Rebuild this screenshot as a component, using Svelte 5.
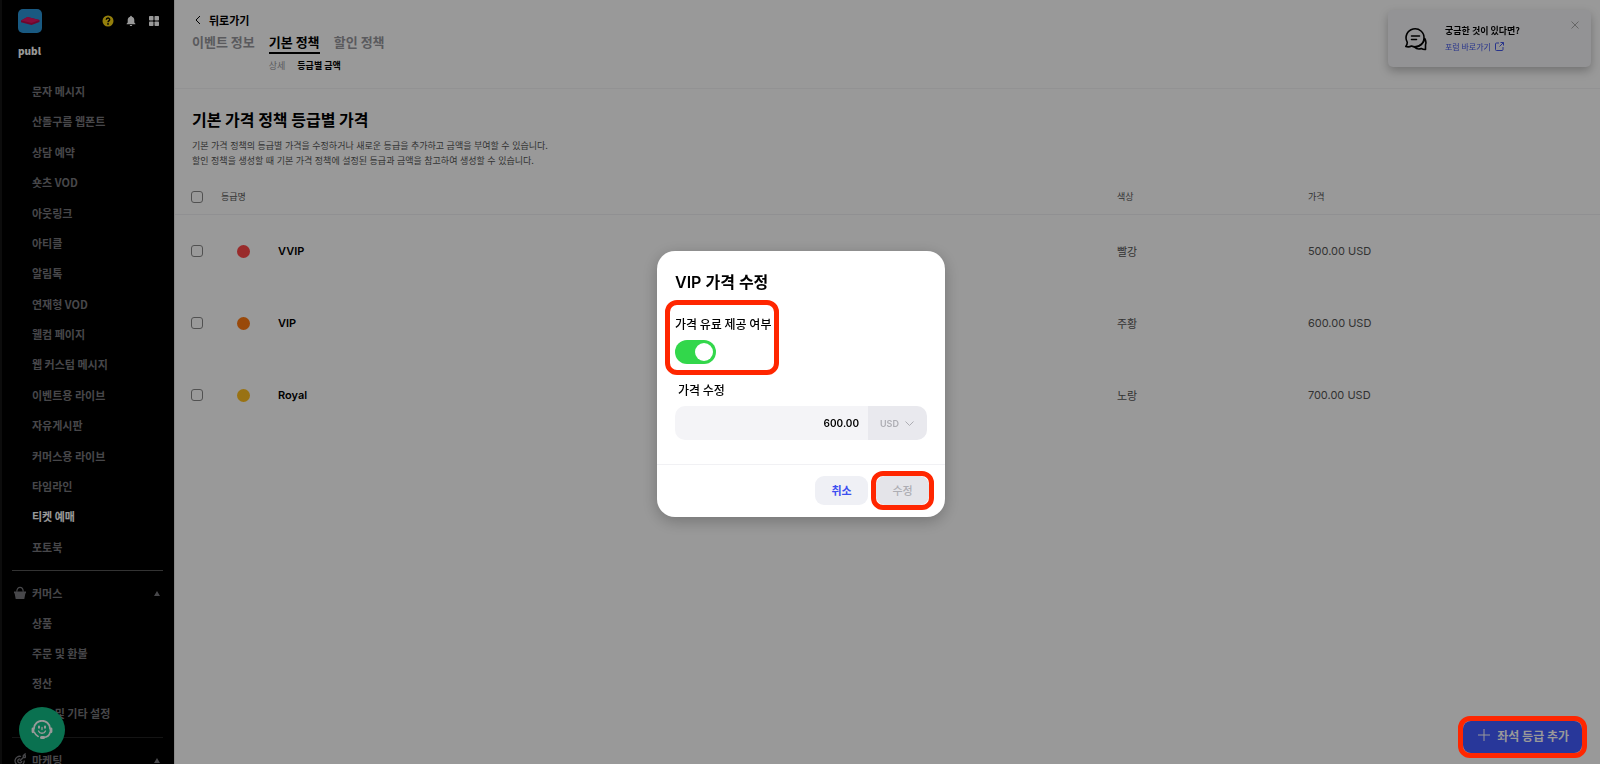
<script>
  let paid = $state(true);
  let price = $state('600.00');
  let currency = $state('USD');

  const menu = [
    '문자 메시지', '산돌구름 웹폰트', '상담 예약', '숏츠 VOD', '아웃링크', '아티클', '알림톡', '연재형 VOD',
    '웰컴 페이지', '웹 커스텀 메시지', '이벤트용 라이브', '자유게시판', '커머스용 라이브', '타임라인', '티켓 예매', '포토북'
  ];
  const commerce = ['상품', '주문 및 환불', '정산', '배송 및 기타 설정'];
  const active = '티켓 예매';

  const grades = [
    { name: 'VVIP', color: '빨강', hex: '#ff4848', price: '500.00 USD' },
    { name: 'VIP', color: '주황', hex: '#ff7a12', price: '600.00 USD' },
    { name: 'Royal', color: '노랑', hex: '#ffbf20', price: '700.00 USD' }
  ];
</script>

<div class="page">
  <aside class="sidebar">
    <div class="brand">
      <svg class="logo" viewBox="0 0 24 24" aria-hidden="true">
        <rect width="24" height="24" rx="5" fill="#2b94d8" />
        <path d="M3 11.5 9.500 8l12 3v2L13.500 16 3 13.200z" fill="#b80b4c" />
        <path d="M3 11.500 9.500 8l12 3-8 3z" fill="#dc1463" />
      </svg>
      <div class="tools">
        <button type="button" aria-label="도움말">
          <svg width="12" height="12" viewBox="0 0 12 12">
            <circle cx="6" cy="6" r="5.5" fill="#f5d313" />
            <path d="M4.300 4.800c0-2.300 3.400-2.300 3.400-.2C7.700 5.800 6 5.900 6 7.200" fill="none" stroke="#000" stroke-width="1.400" />
            <circle cx="6" cy="8.900" r=".9" fill="#000" />
          </svg>
        </button>
        <button type="button" aria-label="알림">
          <svg width="12" height="12" viewBox="0 0 12 12">
            <path d="M6 .8c.6 0 .9.4.9.9C8.600 2.100 9.300 3.400 9.300 5v2.400l1.100 1.300v.6H1.600v-.6l1.100-1.300V5c0-1.600.7-2.900 2.400-3.300 0-.5.3-.9.9-.9zM4.800 9.900h2.400c0 1.600-2.400 1.600-2.400 0z" fill="#fff" />
          </svg>
        </button>
        <button type="button" aria-label="앱">
          <svg width="12" height="12" viewBox="0 0 12 12" fill="#fff">
            <rect x="1" y="1" width="4.500" height="4.500" rx=".8" />
            <rect x="6.500" y="1" width="4.500" height="4.500" rx=".8" />
            <rect x="1" y="6.500" width="4.500" height="4.500" rx=".8" />
            <rect x="6.500" y="6.500" width="4.500" height="4.500" rx=".8" />
          </svg>
        </button>
      </div>
    </div>
    <strong class="site">publ</strong>
    <ul class="menu main-menu">
      {#each menu as item}
        <li><a href="#menu" class:active={item === active}>{item}</a></li>
      {/each}
    </ul>
    <hr />
    <button type="button" class="group">
      <svg width="12" height="14" viewBox="0 0 12 14">
        <path d="M0 5.500h12v1.700h-.6L10.300 13H1.700L.6 7.200H0z" fill="#77777c" />
        <path d="M2.800 5.800C2.800-.2 9.200-.2 9.200 5.800" fill="none" stroke="#77777c" stroke-width="1.200" />
      </svg>
      <span>커머스</span>
      <i class="caret"></i>
    </button>
    <ul class="menu">
      {#each commerce as item}
        <li><a href="#commerce">{item}</a></li>
      {/each}
    </ul>
    <hr class="soft" />
    <button type="button" class="group">
      <svg width="12" height="14" viewBox="0 0 12 14" fill="none" stroke="#77777c" stroke-width="1.300">
        <path d="M7 3.500A4.600 4.600 0 1 0 10.200 7.500" />
        <path d="M6.200 6A2 2 0 1 0 7.800 8M5.800 8l3.500-3.500V2.500L11 1v2h1.500L11 4.600H9.300" />
      </svg>
      <span>마케팅</span>
      <i class="caret"></i>
    </button>
  </aside>

  <main>
    <header>
      <a class="back" href="#back">
        <svg width="6" height="10" viewBox="0 0 6 10"><path d="M5 1 1 5l4 4" fill="none" stroke="#000" /></svg>
        뒤로가기
      </a>
      <nav class="tabs">
        <a href="#info">이벤트 정보</a>
        <div class="tab-group">
          <a class="active" href="#policy">기본 정책</a>
          <div class="subtabs">
            <a href="#detail">상세</a>
            <a class="active" href="#grades">등급별 금액</a>
          </div>
        </div>
        <a href="#discount">할인 정책</a>
      </nav>
    </header>

    <section class="intro">
      <h1>기본 가격 정책 등급별 가격</h1>
      <p>
        기본 가격 정책의 등급별 가격을 수정하거나 새로운 등급을 추가하고 금액을 부여할 수 있습니다.<br />
        할인 정책을 생성할 때 기본 가격 정책에 설정된 등급과 금액을 참고하여 생성할 수 있습니다.
      </p>
    </section>

    <table>
      <colgroup>
        <col class="col-check" />
        <col class="col-swatch" />
        <col />
        <col class="col-color" />
        <col class="col-price" />
      </colgroup>
      <thead>
        <tr>
          <th class="check"><input type="checkbox" aria-label="전체 선택" /></th>
          <th colspan="2">등급명</th>
          <th>색상</th>
          <th>가격</th>
        </tr>
      </thead>
      <tbody>
        {#each grades as grade}
          <tr>
            <td class="check"><input type="checkbox" aria-label={grade.name} /></td>
            <td class="swatch"><span class="dot" style="background: {grade.hex}"></span></td>
            <td class="name">{grade.name}</td>
            <td>{grade.color}</td>
            <td>{grade.price}</td>
          </tr>
        {/each}
      </tbody>
    </table>
  </main>
</div>

<div class="toast">
  <svg width="24" height="24" viewBox="0 0 24 24" fill="none" stroke="#000" stroke-width="1.600" stroke-linejoin="round" stroke-linecap="round">
    <path d="M3.300 15.300A9 9 0 1 1 7.500 19c-1.700 1-3.600 1.200-5.700.5.900-1.200 1.500-2.500 1.500-4.200z" />
    <path d="M20.700 11.500c1.400 2.200 1.500 4.300.8 6.300v4.700c-1.700.1-2.900-.2-4.200-1-2.400 1-5 .4-7-1.600 5.300.1 9.800-3.500 10.400-8.400z" />
    <path d="M7.500 9h8M7.500 12.500h5" />
  </svg>
  <div class="toast-text">
    <strong>궁금한 것이 있다면?</strong>
    <a href="#forum">
      포럼 바로가기
      <svg width="9" height="9" viewBox="0 0 9 9" fill="none" stroke="#4458e8"><path d="M4 1H1.500q-1 0-1 1v5.500q0 1 1 1H7q1 0 1-1V5M5.500.5h3v3M8.500.5l-4 4" /></svg>
    </a>
  </div>
  <button type="button" aria-label="닫기">
    <svg width="8" height="8" viewBox="0 0 8 8"><path d="m.5.5 7 7m0-7-7 7" stroke="#aaa" /></svg>
  </button>
</div>

<button type="button" class="chat" aria-label="상담">
  <svg width="22" height="20" viewBox="0 0 22 20" fill="none" stroke="#fff" stroke-linecap="round">
    <path d="M3 8.500C3.500-1.800 18.500-1.800 19 8.500" stroke-width="1.800" />
    <path d="M2 8.800v3M20 8.800v3" stroke-width="2.800" />
    <path d="M3.500 12.500c.8 2 2 3.200 3.700 4M19 12.500c-.5 2.900-2.300 4.700-6.500 4.900" stroke-width="1.600" />
    <path d="M10.500 17.500h2" stroke-width="3" />
    <path d="M8 6.500v1.300M14 6.500v1.300" stroke-width="2" />
    <path d="M7.500 11c1.200 3 5.800 3 7 0M11 7.500v2" stroke-width="1.300" />
  </svg>
</button>

<div class="overlay">
  <form class="modal" onsubmit={(e) => e.preventDefault()}>
    <div class="modal-body">
      <h2>VIP 가격 수정</h2>
      <div class="marked paid">
        <label for="paid">가격 유료 제공 여부</label>
        <input id="paid" class="toggle" type="checkbox" role="switch" bind:checked={paid} />
      </div>
      <label class="price-label" for="price">가격 수정</label>
      <div class="amount">
        <input id="price" type="text" bind:value={price} />
        <div class="currency">
          <select bind:value={currency} disabled aria-label="통화">
            <option>USD</option>
          </select>
          <svg width="9" height="6" viewBox="0 0 9 6"><path d="m.5.5 4 4 4-4" fill="none" stroke="#adadb3" /></svg>
        </div>
      </div>
    </div>
    <footer>
      <button type="button" class="cancel">취소</button>
      <div class="marked submit">
        <button type="submit" disabled>수정</button>
      </div>
    </footer>
  </form>
</div>

<div class="marked add">
  <button type="button">
    <svg width="12" height="12" viewBox="0 0 12 12"><path d="M6 0v12M0 6h12" stroke="#999" /></svg>
    좌석 등급 추가
  </button>
</div>

<style>
:global(body) {
  margin: 0;
  font-family: 'Noto Sans CJK KR', sans-serif;
  font-size: 11px;
  color: #000;
}
* { box-sizing: border-box; }
a { color: inherit; text-decoration: none; }
button {
  border: 0;
  padding: 0;
  background: none;
  font: inherit;
  color: inherit;
  cursor: pointer;
}
svg { display: block; flex: none; }
.page { display: flex; min-height: 100vh; background: #fff; }

/* sidebar */
.sidebar {
  width: 174px;
  height: 100vh;
  flex: none;
  overflow: hidden;
  padding: 9px 11px 0 12px;
  background: #000;
  color: #77777c;
  font-weight: 700;
  box-shadow: inset 2px 0 #151515;
}
.brand { display: flex; justify-content: space-between; padding: 0 3px 0 6px; }
.logo { width: 24px; height: 24px; }
.tools { display: flex; align-items: center; gap: 11px; }
.site { display: block; padding-left: 6px; margin-top: 10px; font-size: 10px; line-height: 16px; color: #fff; }
.menu { list-style: none; margin: 0; padding: 0 0 0 20px; }
.menu li { height: 30px; line-height: 30px; white-space: nowrap; }
.main-menu {
  display: grid;
  grid-auto-rows: 1fr;
  min-height: 486px;
  margin: 17px 0 8px;
}
.menu .active { color: #fff; }
hr { height: 1px; margin: 0; border: 0; background: #555; }
hr.soft { margin-top: 9px; background: #222; }
.group {
  display: flex;
  align-items: center;
  gap: 6px;
  width: 100%;
  height: 30px;
  margin-top: 7px;
  padding: 0 3px 0 2px;
}
.group span { margin-right: auto; }
.caret {
  border: 3px solid transparent;
  border-top: 0;
  border-bottom: 5px solid #77777c;
}

/* content */
main { flex: 1; min-width: 0; border-left: 1px solid #e4e4e4; }
header { height: 89px; padding: 12px 17px 0; border-bottom: 1px solid #f3f3f5; }
.back {
  display: flex;
  align-items: center;
  gap: 8px;
  padding-left: 3px;
  line-height: 16px;
  font-weight: 700;
}
.tabs { display: flex; gap: 14px; margin-top: 3px; }
.tabs a { font-size: 13px; line-height: 21px; font-weight: 700; color: #96969c; white-space: nowrap; }
.tabs a.active { color: #000; }
.tab-group { width: 51px; }
.tab-group > a { display: block; border-bottom: 2px solid #000; }
.subtabs { display: flex; gap: 12px; margin-top: 2px; }
.tabs .subtabs a { font-size: 9px; line-height: 20px; font-weight: 400; }
.tabs .subtabs a.active { font-weight: 700; }
.intro { padding: 18px 17px 0; }
h1 { margin: 0; font-size: 16px; line-height: 24px; }
p {
  margin: 7px 0 0;
  font-family: Inter, 'Noto Sans CJK KR', sans-serif;
  font-size: 9px;
  line-height: 15px;
  color: #555;
}
table { width: 100%; table-layout: fixed; border-collapse: collapse; margin-top: 10px; }
.col-check { width: 46px; }
.col-swatch { width: 57px; }
.col-color { width: 13.4%; }
.col-price { width: 20.5%; }
th {
  height: 36px;
  padding: 2px 0 0;
  border-bottom: 1px solid #f1f1f3;
  font-size: 9px;
  font-weight: 400;
  text-align: left;
  color: #555;
}
td { height: 72px; padding: 2px 0 0; font-family: Inter, 'Noto Sans CJK KR', sans-serif; color: #555; }
.check { padding-left: 16px; }
.check input {
  display: block;
  appearance: none;
  width: 12px;
  height: 12px;
  margin: 0;
  border: 1px solid #888;
  border-radius: 3px;
  background: #fff;
}
.check input:checked { background: #4458e8; }
.swatch { padding-left: 16px; }
.dot { display: block; width: 13px; height: 13px; border-radius: 50%; }
.name { font-weight: 600; color: #000; }

/* floating parts */
.toast {
  position: fixed;
  top: 10px;
  right: 9px;
  display: flex;
  align-items: center;
  gap: 17px;
  width: 203px;
  height: 57px;
  padding-left: 16px;
  border-radius: 5px;
  background: #f5f5f9;
  box-shadow: 0 4px 10px rgba(0, 0, 0, 0.25);
}
.toast-text { flex: 1; font-size: 9px; line-height: 16px; white-space: nowrap; }
.toast-text strong { display: block; }
.toast-text a { display: flex; align-items: center; gap: 4px; font-size: 8px; color: #4458e8; }
.toast button { align-self: flex-start; padding: 11px 12px 0 0; }
.chat {
  position: fixed;
  left: 19px;
  bottom: 11px;
  display: grid;
  place-items: center;
  width: 46px;
  height: 46px;
  border-radius: 50%;
  background: #12bd85;
}
.overlay {
  position: fixed;
  inset: 0;
  display: grid;
  place-items: center;
  padding: 4px 0 0 2px;
  background: rgba(0, 0, 0, 0.4);
}

/* price dialog */
.modal {
  width: 288px;
  border-radius: 18px;
  background: #fff;
  box-shadow: 0 4px 16px rgba(0, 0, 0, 0.25);
}
.modal-body { padding: 18px 18px 24px; }
h2 { margin: 0; font: 600 16px/26px Inter, 'Noto Sans CJK KR', sans-serif; }
label { display: block; font-size: 12px; line-height: 18px; font-weight: 500; white-space: nowrap; }
.marked { position: relative; }
.marked::after {
  content: '';
  position: absolute;
  inset: -5px;
  border: 5px solid #ff2600;
  border-radius: 12px;
  pointer-events: none;
}
.paid { width: 96px; margin-top: 20px; }
.paid::after { inset: -15px -8px -11px -10px; }
.toggle {
  display: block;
  appearance: none;
  width: 41px;
  height: 24px;
  margin: 7px 0 0;
  padding: 3px;
  border-radius: 12px;
  background: #c8c8cd;
}
.toggle::before {
  content: '';
  display: block;
  width: 18px;
  height: 18px;
  border-radius: 50%;
  background: #fff;
}
.toggle:checked { background: #32d74b; }
.toggle:checked::before { margin-left: auto; }
.price-label { margin: 17px 0 7px 3px; }
.amount { display: flex; height: 34px; border-radius: 10px; overflow: hidden; }
.amount input {
  flex: 1;
  min-width: 0;
  padding: 0 9px;
  border: 0;
  background: #f4f4f7;
  font: 600 10px Inter, sans-serif;
  text-align: right;
}
.currency { position: relative; width: 59px; }
.currency select {
  appearance: none;
  width: 100%;
  height: 100%;
  padding: 0 12px;
  border: 0;
  background: #e9e9ee;
  font: 600 9px Inter, sans-serif;
  color: #adadb3;
  opacity: 1;
}
.currency svg { position: absolute; right: 13px; top: 15px; pointer-events: none; }
footer {
  display: flex;
  justify-content: flex-end;
  gap: 8px;
  padding: 11px 16px 12px;
  border-top: 1px solid #f1f1f4;
}
footer button {
  width: 53px;
  height: 29px;
  padding-bottom: 2px;
  border-radius: 9px;
  background: #eff0f5;
  font-weight: 700;
}
.cancel { color: #3d4ff0; }
.submit button { display: block; background: #e4e4e9; color: #adadb3; font-weight: 500; }
.add { position: fixed; right: 18px; bottom: 11px; }
.add button {
  display: flex;
  align-items: center;
  gap: 7px;
  height: 32px;
  padding: 0 13px 4px 15px;
  border-radius: 8px;
  background: #28379a;
  font-size: 12px;
  font-weight: 700;
  color: #999;
  white-space: nowrap;
}
</style>
